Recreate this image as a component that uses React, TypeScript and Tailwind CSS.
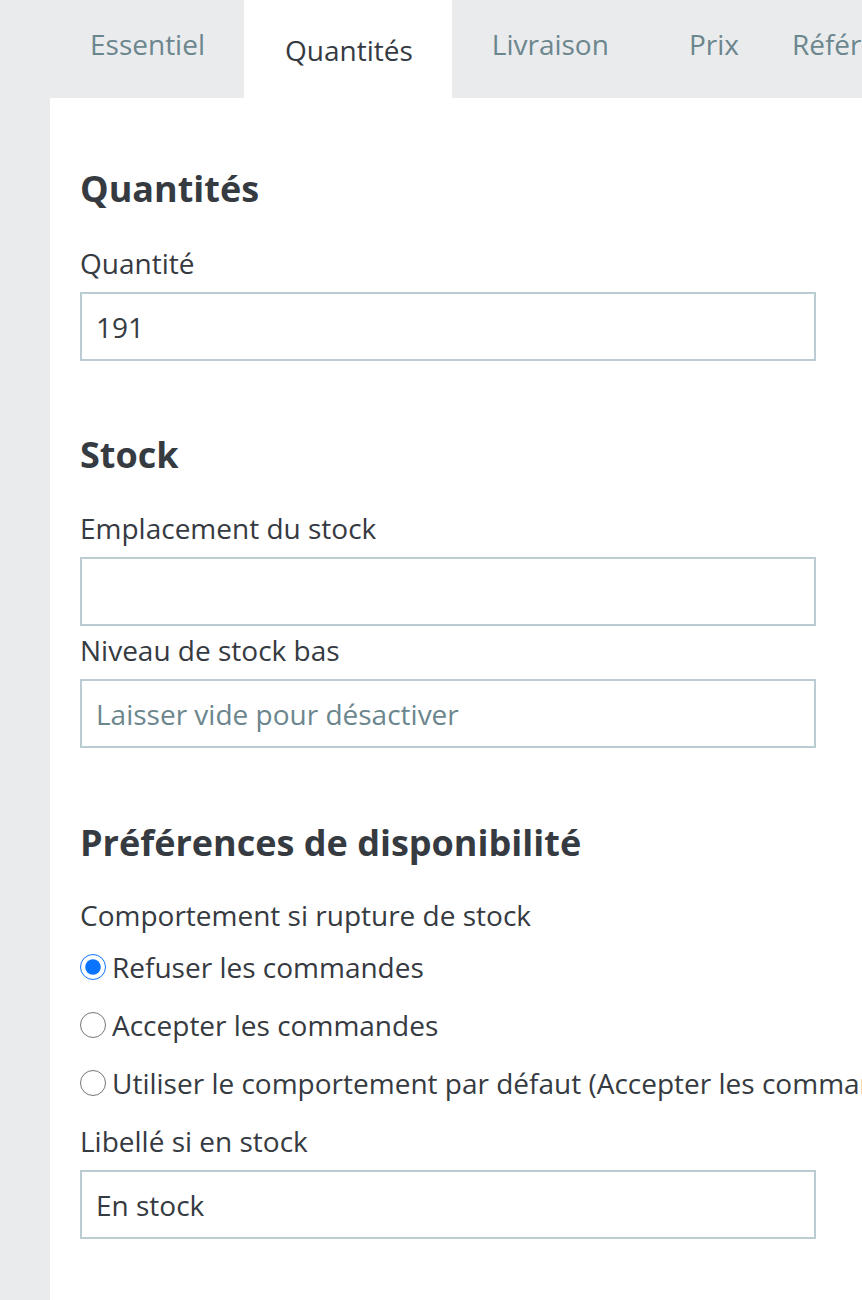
import React, { useState } from 'react';

const tabs = [
  { name: 'Essentiel', cls: 'pl-[40px] pr-[39px]' },
  { name: 'Quantités', cls: 'pl-[41px] pr-[39px]' },
  { name: 'Livraison', cls: 'pl-[40px] pr-[39px]' },
  { name: 'Prix', cls: 'pl-[41px] pr-[27px]' },
  { name: 'Références', cls: 'pl-[26px] pr-[40px]' },
];

const font = { fontFamily: '"Open Sans", "Liberation Sans", sans-serif' };

interface FieldProps {
  label: string;
  value?: string;
  placeholder?: string;
  className?: string;
}

const Field: React.FC<FieldProps> = ({ label, value, placeholder, className }) => (
  <div className={className}>
    <label className="block text-[28px] leading-[36px] text-[#363a41]">{label}</label>
    <input
      type="text"
      defaultValue={value}
      placeholder={placeholder}
      className="mt-[11px] block h-[69px] w-[736px] border-2 border-[#bbcdd2] bg-white px-[14px] text-[28px] text-[#363a41] placeholder:text-[#6c868e] outline-none"
    />
  </div>
);

const SectionTitle: React.FC<{ children: React.ReactNode; className?: string }> = ({ children, className }) => (
  <h2 className={`text-[36px] leading-[40px] font-bold text-[#363a41] ${className ?? ''}`}>{children}</h2>
);

const options = [
  'Refuser les commandes',
  'Accepter les commandes',
  'Utiliser le comportement par défaut (Accepter les commandes)',
];

export default function App() {
  const [choice, setChoice] = useState(0);

  return (
    <div style={font} className="h-[1300px] w-[862px] overflow-hidden bg-[#eaebed]">
      {/* onglets */}
      <div className="flex h-[98px] pl-[50px] whitespace-nowrap">
        {tabs.map((t, i) => (
          <div
            key={t.name}
            className={`${t.cls} shrink-0 text-[28px] leading-[48px] ${
              i === 1 ? 'bg-white pt-[26px] text-[#363a41]' : 'pt-[20px] text-[#6c868e]'
            }`}
          >
            {t.name}
          </div>
        ))}
      </div>

      {/* panneau */}
      <div className="ml-[50px] h-[1202px] bg-white pl-[30px] pt-[71px]">
        <SectionTitle>Quantités</SectionTitle>
        <Field className="mt-[36px]" label="Quantité" value="191" />

        <SectionTitle className="mt-[74px]">Stock</SectionTitle>
        <Field className="mt-[35px]" label="Emplacement du stock" />
        <Field className="mt-[6px]" label="Niveau de stock bas" placeholder="Laisser vide pour désactiver" />

        <SectionTitle className="mt-[75px]">Préférences de disponibilité</SectionTitle>
        <div className="mt-[34px] text-[28px] leading-[36px] text-[#363a41]">Comportement si rupture de stock</div>
        <div className="mt-[5px] flex flex-col">
          {options.map((o, i) => (
            <label key={o} className="flex h-[58px] items-center whitespace-nowrap text-[28px] text-[#363a41]">
              <input
                type="radio"
                name="oos"
                checked={choice === i}
                onChange={() => setChoice(i)}
                className="m-0 mr-[6px] h-[26px] w-[26px] shrink-0 accent-[#0a74ff]"
              />
              {o}
            </label>
          ))}
        </div>
        <Field className="mt-[11px]" label="Libellé si en stock" value="En stock" />
      </div>
    </div>
  );
}
